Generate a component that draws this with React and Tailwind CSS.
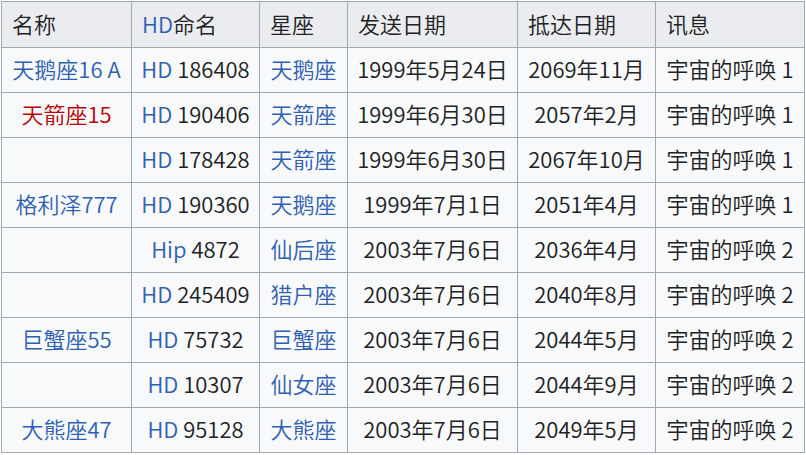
import React from 'react';

// 列宽（像素）
const COLS = [130, 128, 88, 170, 138, 149];

const HEADERS = [
  { text: '名称' },
  { link: 'HD', text: '命名' },
  { text: '星座' },
  { text: '发送日期' },
  { text: '抵达日期' },
  { text: '讯息' },
];

const ROWS = [
  { name: '天鹅座16 A', cat: 'HD', num: '186408', con: '天鹅座', sent: '1999年5月24日', arrive: '2069年11月', msg: '宇宙的呼唤 1' },
  { name: '天箭座15', red: true, cat: 'HD', num: '190406', con: '天箭座', sent: '1999年6月30日', arrive: '2057年2月', msg: '宇宙的呼唤 1' },
  { name: '', cat: 'HD', num: '178428', con: '天箭座', sent: '1999年6月30日', arrive: '2067年10月', msg: '宇宙的呼唤 1' },
  { name: '格利泽777', cat: 'HD', num: '190360', con: '天鹅座', sent: '1999年7月1日', arrive: '2051年4月', msg: '宇宙的呼唤 1' },
  { name: '', cat: 'Hip', num: '4872', con: '仙后座', sent: '2003年7月6日', arrive: '2036年4月', msg: '宇宙的呼唤 2' },
  { name: '', cat: 'HD', num: '245409', con: '猎户座', sent: '2003年7月6日', arrive: '2040年8月', msg: '宇宙的呼唤 2' },
  { name: '巨蟹座55', cat: 'HD', num: '75732', con: '巨蟹座', sent: '2003年7月6日', arrive: '2044年5月', msg: '宇宙的呼唤 2' },
  { name: '', cat: 'HD', num: '10307', con: '仙女座', sent: '2003年7月6日', arrive: '2044年9月', msg: '宇宙的呼唤 2' },
  { name: '大熊座47', cat: 'HD', num: '95128', con: '大熊座', sent: '2003年7月6日', arrive: '2049年5月', msg: '宇宙的呼唤 2' },
];

const cell = 'border border-[#a2a9b1] p-0 pb-[4px] whitespace-nowrap';

export default function App() {
  return (
    <div className="w-[806px] h-[455px] bg-white pl-px pt-px">
      <table
        className="table-fixed border-collapse text-[22px] leading-none font-[350] text-[#202122]"
        style={{ fontFamily: '"Noto Sans CJK SC", "Noto Sans", sans-serif' }}
      >
        <colgroup>
          {COLS.map((w, i) => (
            <col key={i} style={{ width: w }} />
          ))}
        </colgroup>
        <thead>
          <tr className="h-[46px] bg-[#eaecf0]">
            {HEADERS.map((h, i) => (
              <th key={i} className={`${cell} text-left font-[350] pl-[10px]`}>
                {h.link && <span className="text-[#2f5fb3]">{h.link}</span>}
                {h.text}
              </th>
            ))}
          </tr>
        </thead>
        <tbody>
          {ROWS.map((r, i) => (
            <tr key={i} className="h-[45px] bg-[#f8f9fa] text-center">
              <td className={`${cell} ${r.red ? 'text-[#ba0000]' : 'text-[#2f5fb3]'}`}>{r.name}</td>
              <td className={cell}>
                <span className="text-[#2f5fb3]">{r.cat}</span> {r.num}
              </td>
              <td className={`${cell} text-[#2f5fb3]`}>{r.con}</td>
              <td className={cell}>{r.sent}</td>
              <td className={cell}>{r.arrive}</td>
              <td className={cell}>{r.msg}</td>
            </tr>
          ))}
        </tbody>
      </table>
    </div>
  );
}
